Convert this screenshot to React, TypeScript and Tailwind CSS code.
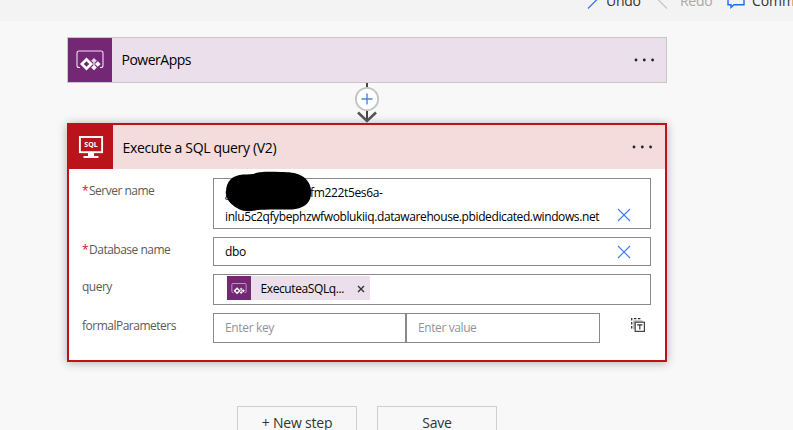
import React from "react";

function PowerAppsIcon({ className }: { className: string }) {
  return (
    <svg viewBox="0 0 28 20" className={className} fill="none">
      <path
        d="M4 17.5H3Q1 17.5 1 15.5V3Q1 1 3 1H25Q27 1 27 3V15.5Q27 17.5 25 17.5H24"
        stroke="#efe3f0"
        strokeWidth="1.1"
      />
      <path d="M10.5 7.5L17 14L10.5 20.5L4 14Z" fill="#fff" />
      <path d="M10.5 11.2L13.3 14L10.5 16.8L7.7 14Z" fill="#742774" />
      <path d="M18 8L20.8 10.8L18 13.6L15.2 10.8Z" fill="#e3d1e6" />
      <path d="M21.8 11.2L24.6 14L21.8 16.8L19 14Z" fill="#fff" />
      <path d="M18 14.6L20.8 17.4L18 20.2L15.2 17.4Z" fill="#fff" />
      <path d="M17.8 12.4L19.4 14L17.8 15.6L16.2 14Z" fill="#c9a9ca" />
    </svg>
  );
}

function SqlIcon() {
  return (
    <svg viewBox="0 0 26 24" className="h-6 w-[26px]" fill="none">
      <rect x="1.9" y="2" width="22.2" height="15.2" stroke="#fff" strokeWidth="1.9" />
      <path d="M10 18H16V21H20.5V23H5.5V21H10Z" fill="#fff" />
      <text
        x="13"
        y="12.4"
        textAnchor="middle"
        fill="#fff"
        fontSize="7"
        fontWeight="700"
        className="font-['Open_Sans',sans-serif]"
      >
        SQL
      </text>
    </svg>
  );
}

function Dots() {
  return (
    <svg viewBox="0 0 22 4" className="h-1 w-[22px]" fill="#222">
      <circle cx="2" cy="2" r="1.4" />
      <circle cx="10.3" cy="2" r="1.4" />
      <circle cx="18.6" cy="2" r="1.4" />
    </svg>
  );
}

function ClearIcon() {
  return (
    <svg viewBox="0 0 14 14" className="size-3.5 shrink-0" stroke="#3b78f5" strokeWidth="1.1">
      <path d="M1 1L13 13M13 1L1 13" />
    </svg>
  );
}

function Label({ text, required }: { text: string; required?: boolean }) {
  return (
    <div className="flex w-[131px] shrink-0 pt-1 text-[12px] leading-[18px] text-[#5c5a58]">
      {required && <span className="w-[7px] text-[#e00b1c]">*</span>}
      <span className="tracking-[-0.5px]">{text}</span>
    </div>
  );
}

export default function App() {
  return (
    <div className="h-[430px] w-[793px] overflow-hidden bg-[#f8f8f8] font-['Open_Sans','Noto_Sans',sans-serif] text-black">
      <header className="flex h-[21px] items-start overflow-hidden bg-[#f3f3f3] pl-[586px] text-[14px] leading-[20px] whitespace-nowrap text-[#333]">
        <svg viewBox="0 0 12 10" className="h-2.5 w-3 shrink-0" stroke="#2f6ff2" strokeWidth="1.2">
          <path d="M2 8.5L11 -0.5" />
        </svg>
        <span className="-mt-[9px] ml-2 w-[51px] shrink-0 tracking-[-0.3px]">Undo</span>
        <svg viewBox="0 0 12 10" className="h-2.5 w-3 shrink-0" stroke="#c4c4c4" strokeWidth="1.2">
          <path d="M1 -0.5L10 8.5" />
        </svg>
        <span className="-mt-[9px] ml-[11px] w-[47px] shrink-0 tracking-[-0.3px] text-[#a8a8a8]">Redo</span>
        <svg viewBox="0 0 18 10" className="h-2.5 w-[18px] shrink-0" fill="none" stroke="#2469f0" strokeWidth="1.4">
          <path d="M1 -2V4.8H4V7.5L7 4.8H17V-2" />
        </svg>
        <span className="-mt-[9px] ml-[7px] shrink-0 tracking-[-0.1px]">Comments</span>
      </header>

      <main className="pt-4 pl-[67px]">
        <section className="flex h-[46px] w-[600px] items-center border border-[#c8c6c6] bg-[#ebdfeb]">
          <div className="flex size-11 items-center justify-center bg-[#742774]">
            <PowerAppsIcon className="h-5 w-7 overflow-visible" />
          </div>
          <h2 className="-mt-0.5 ml-[9.5px] flex-1 text-[14px] tracking-[-0.5px]">PowerApps</h2>
          <div className="mr-2.5">
            <Dots />
          </div>
        </section>

        <div className="h-10 w-[600px]">
          <svg viewBox="0 0 30 40" className="mx-auto h-10 w-[30px]" fill="none">
            <path d="M15 0V38" stroke="#484644" strokeWidth="2" />
            <path d="M6 29.5L15 38L24 29.5" stroke="#555" strokeWidth="2.6" />
            <circle cx="15" cy="16" r="11.2" fill="#fff" stroke="#c4c4c4" strokeWidth="1.8" />
            <path d="M9.5 16H20.5M15 10.5V21.5" stroke="#4488dc" strokeWidth="1.4" />
          </svg>
        </div>

        <section className="h-[239px] w-[600px] border-2 border-[#ba141a] bg-white shadow-[0_1px_9px_rgba(0,0,0,0.3)]">
          <div className="flex h-11 items-center bg-[#f4dcdc]">
            <div className="flex size-11 items-center justify-center bg-[#ba141a]">
              <SqlIcon />
            </div>
            <h2 className="ml-[9.5px] flex-1 text-[14px] tracking-[-0.33px]">Execute a SQL query (V2)</h2>
            <div className="mr-[11px]">
              <Dots />
            </div>
          </div>

          <div className="flex flex-col gap-2 pt-[9px] pl-[13px] text-[12px]">
            <div className="flex">
              <Label text="Server name" required />
              <div className="relative flex h-[51px] w-[438px] items-end justify-between border border-[#8a8a8a] pr-[19px] pl-[11px]">
                <div className="-mb-px leading-6 tracking-[-0.39px] whitespace-nowrap">
                  <div className="flex">
                    <span className="w-[85px]">g</span>
                    <span className="tracking-[-0.35px]">fm222t5es6a-</span>
                  </div>
                  <div>inlu5c2qfybephzwfwoblukiiq.datawarehouse.pbidedicated.windows.net</div>
                </div>
                <div className="pb-1.5">
                  <ClearIcon />
                </div>
                <svg viewBox="0 0 86 42" className="absolute -top-[8px] left-[12px] h-[42px] w-[86px]" fill="#000">
                  <path d="M0 21C0 10 7 4 17 3.5C23 3.5 28 3 32 1.5C38 .2 46 .8 55 1C62 1 70 1.5 75 4.5C82 8 86 15 85 24C84 33 76 38 66 38.5C52 38.5 42 38.5 31 39C24 41 17 41 11 37C4 33 0 28 0 21Z" />
                </svg>
              </div>
            </div>

            <div className="flex">
              <Label text="Database name" required />
              <div className="flex h-[29px] w-[438px] items-center justify-between border border-[#8a8a8a] pr-[19px] pl-[11px]">
                <span className="tracking-[-0.4px]">dbo</span>
                <ClearIcon />
              </div>
            </div>

            <div className="flex">
              <Label text="query" />
              <div className="flex h-[31px] w-[438px] items-start border border-[#8a8a8a] pt-px pl-[13px]">
                <div className="flex h-6 w-[143px] items-center bg-[#ebdfeb]">
                  <div className="flex size-6 items-center justify-center bg-[#742774]">
                    <PowerAppsIcon className="h-[11px] w-[16px] overflow-visible" />
                  </div>
                  <span className="mt-0.5 ml-[9.5px] flex-1 tracking-[-0.4px]">ExecuteaSQLq...</span>
                  <svg viewBox="0 0 8 8" className="mt-0.5 mr-[5px] size-2" stroke="#333" strokeWidth="1.4">
                    <path d="M1 1L7 7M7 1L1 7" />
                  </svg>
                </div>
              </div>
            </div>

            <div className="flex">
              <Label text="formalParameters" />
              <div className="flex h-[30px] w-[193px] items-center border border-[#8a8a8a] pl-[11px] text-[#8f959c]">
                <span className="tracking-[-0.35px]">Enter key</span>
              </div>
              <div className="flex h-[30px] w-[194px] items-center border border-[#8a8a8a] pl-[11px] text-[#8f959c]">
                <span className="tracking-[-0.4px]">Enter value</span>
              </div>
              <svg viewBox="0 0 14 14" className="mt-[5px] ml-[31px] size-3.5" fill="none">
                <path d="M.7 10.5V.7H10.5" stroke="#333" strokeWidth="1.3" strokeDasharray="2.5 1.5" />
                <path d="M3 11.5V3H11.5" stroke="#999" strokeWidth="1.2" />
                <rect x="4.2" y="4.2" width="9.2" height="9.2" fill="#fff" stroke="#444" strokeWidth="1.2" />
                <path d="M6.2 6.8H11.4M8.8 6.8V11.5" stroke="#333" strokeWidth="1.2" />
              </svg>
            </div>
          </div>
        </section>

        <div className="mt-11 flex gap-5 pl-[170px] text-[14px] tracking-[-0.2px] text-[#333]">
          <button className="h-8 w-[120px] border border-[#cfcfcf] leading-8">+ New step</button>
          <button className="h-8 w-[120px] border border-[#cfcfcf] leading-8">Save</button>
        </div>
      </main>
    </div>
  );
}
